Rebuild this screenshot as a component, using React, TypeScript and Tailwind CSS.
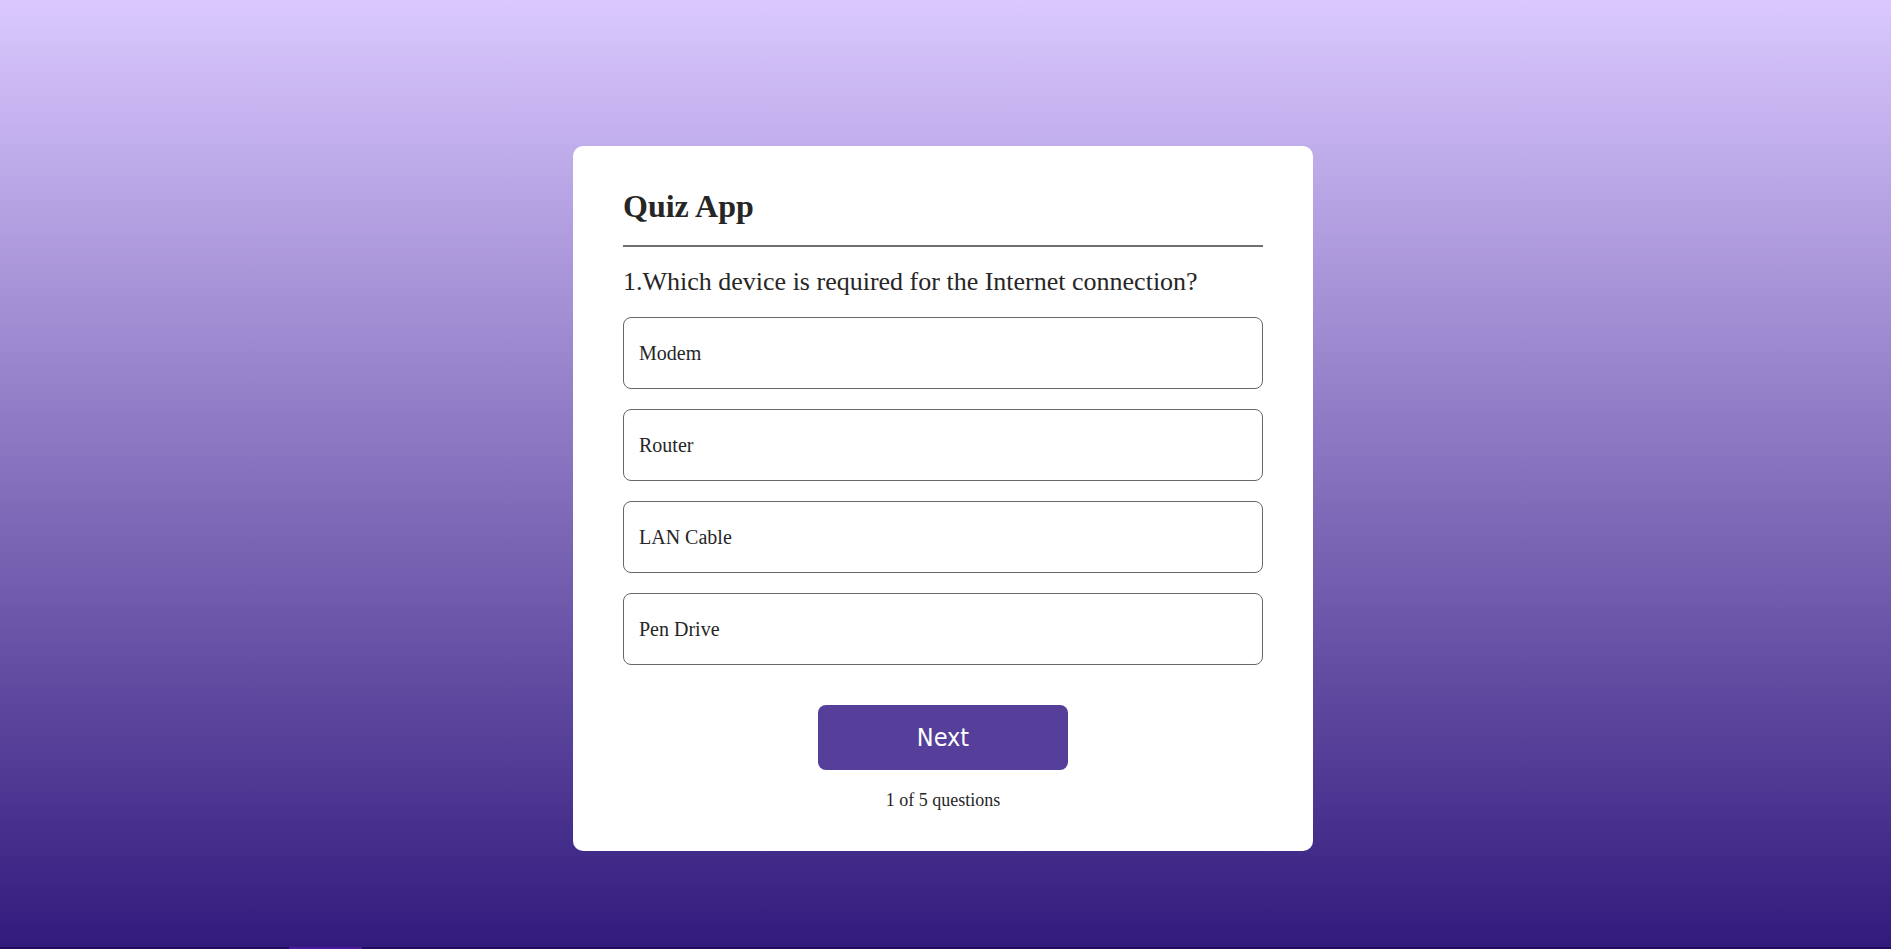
import React from "react";

const options = ["Modem", "Router", "LAN Cable", "Pen Drive"];

const App = () => {
  return (
    <div className="w-full h-[949px] flex flex-col bg-[linear-gradient(to_bottom,#dac8ff,#311a7c)] font-['Liberation_Serif',serif]">
      <div className="flex-1 pr-[5px] pt-[146px]">
        <div className="w-[740px] mx-auto bg-white text-[#262626] rounded-[10px] px-[50px] pt-[42px] pb-[40px] flex flex-col gap-[20px]">
          <h1 className="text-[32px] font-bold leading-[37px]">Quiz App</h1>
          <hr className="border-none h-[2px] bg-[#707070]" />
          <h2 className="text-[26px] font-medium leading-[30px]">
            1.Which device is required for the Internet connection?
          </h2>
          <ul>
            {options.map((o) => (
              <li
                key={o}
                className="flex items-center h-[72px] pl-[15px] border border-[#686868] rounded-[8px] mb-[20px] text-[20px] cursor-pointer"
              >
                {o}
              </li>
            ))}
          </ul>
          <button className="mx-auto w-[250px] h-[65px] bg-[#553f9a] text-white text-[25px] rounded-[8px] font-['DejaVu_Sans_Condensed','Liberation_Sans',sans-serif]">
            Next
          </button>
          <div className="mx-auto text-[18px] leading-[21px]">1 of 5 questions</div>
        </div>
      </div>
      <div className="h-[2px] bg-[#220a60] flex">
        <div className="ml-[289px] w-[73px] bg-[#4a1a9a]" />
      </div>
    </div>
  );
};

export default App;
